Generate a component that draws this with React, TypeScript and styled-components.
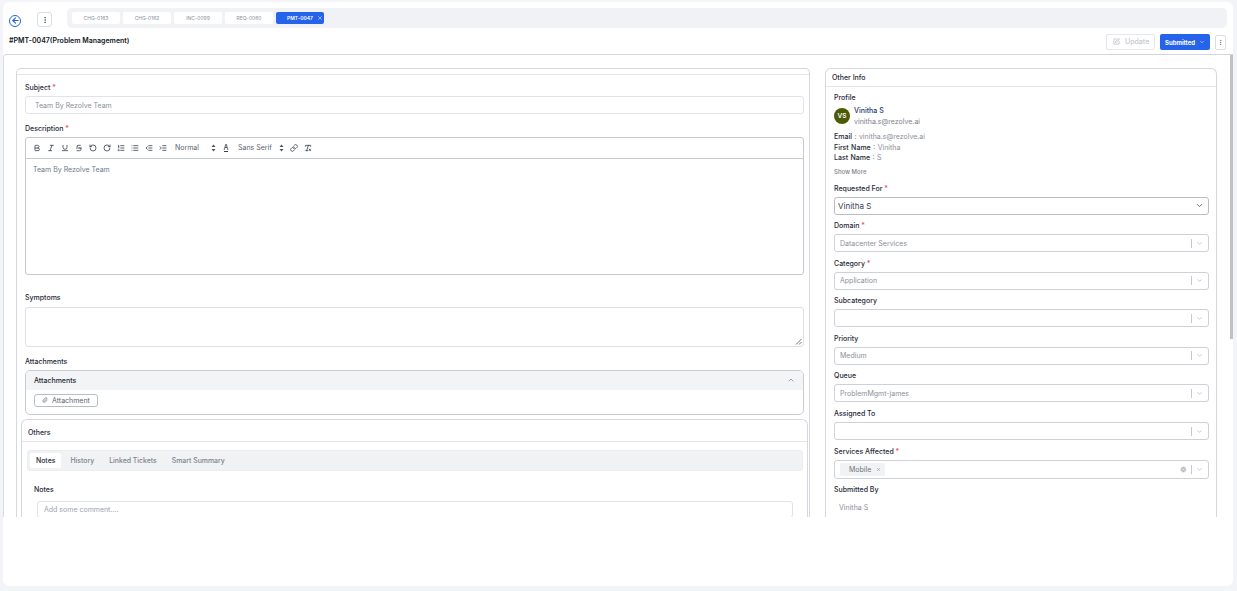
import { FC, ReactNode } from 'react'
import styled, { createGlobalStyle } from 'styled-components'
import {
  ArrowLeft,
  Bold,
  ChevronDown,
  ChevronUp,
  CircleX,
  EllipsisVertical,
  Indent,
  Italic,
  Link,
  List,
  ListOrdered,
  Outdent,
  Paperclip,
  RemoveFormatting,
  RotateCcw,
  RotateCw,
  SquarePen,
  Strikethrough,
  Underline,
  X,
} from 'lucide-react'

const GlobalStyle = createGlobalStyle`
  html, body { margin: 0; padding: 0; height: 100%; overflow: hidden; background: #f3f4f8; }
  body { font-family: Inter, "Noto Sans", "Liberation Sans", sans-serif; color: #1f2937; }
  * { box-sizing: border-box; }
`

const tickets = ['CHG-0163', 'CHG-0162', 'INC-0099', 'REQ-0060']

const toolbarLeft = [Bold, Italic, Underline, Strikethrough, RotateCcw, RotateCw, ListOrdered, List, Outdent, Indent]

const Required: FC = () => <Star>*</Star>

// the up/down arrows of the editor's pickers
const PickerArrows: FC = () => (
  <svg width='5' height='8' viewBox='0 0 5 8'>
    <path d='M2.5 0.5 4.5 3H0.5ZM2.5 7.5 0.5 5H4.5Z' fill='#4b5563' />
  </svg>
)

const SelectField: FC<{ label: string; value?: string; required?: boolean }> = ({ label, value, required }) => (
  <Field>
    <Label tight>
      {label} {required && <Required />}
    </Label>
    <SelectBox>
      <SelectValue>{value}</SelectValue>
      <Separator />
      <ChevronDown size={7} color='#9ca3af' />
    </SelectBox>
  </Field>
)

const Info: FC<{ name: string; children: ReactNode }> = ({ name, children }) => (
  <InfoRow>
    <b>{name}</b> : <span>{children}</span>
  </InfoRow>
)

export default function App() {
  return (
    <>
      <GlobalStyle />
      <Shell>
        <TopRow>
          <BackButton>
            <ArrowLeft size={9} strokeWidth={3} color='#2563eb' />
          </BackButton>
          <Kebab>
            <EllipsisVertical size={8} color='#374151' />
          </Kebab>
          <TabStrip>
            {tickets.map(t => (
              <TicketTab key={t}>{t}</TicketTab>
            ))}
            <ActiveTab>
              PMT-0047
              <X size={6} color='#fff' />
            </ActiveTab>
          </TabStrip>
        </TopRow>
        <TitleRow>
          <Title>#PMT-0047(Problem Management)</Title>
          <Actions>
            <UpdateButton>
              <SquarePen size={7} color='#a9adb5' />
              Update
            </UpdateButton>
            <SubmitButton>
              Submitted
              <ChevronDown size={6} />
            </SubmitButton>
            <SmallKebab>
              <EllipsisVertical size={7} color='#6b7280' />
            </SmallKebab>
          </Actions>
        </TitleRow>
        <Content>
          <Columns>
            <MainCard>
              <MainHead />
              <MainBody>
                <Field>
                  <Label tight>
                    Subject <Required />
                  </Label>
                  <TextInput>Team By Rezolve Team</TextInput>
                </Field>
                <Field>
                  <Label tight>
                    Description <Required />
                  </Label>
                  <Editor>
                    <Toolbar>
                      {toolbarLeft.map((Icon, i) => (
                        <ToolIcon key={i}>
                          <Icon size={8} strokeWidth={2.4} />
                        </ToolIcon>
                      ))}
                      <ToolSelect width={49}>
                        Normal
                        <PickerArrows />
                      </ToolSelect>
                      <ToolIcon>
                        <ColorA>A</ColorA>
                      </ToolIcon>
                      <ToolSelect width={54}>
                        Sans Serif
                        <PickerArrows />
                      </ToolSelect>
                      <ToolIcon>
                        <Link size={8} strokeWidth={2.4} />
                      </ToolIcon>
                      <ToolIcon>
                        <RemoveFormatting size={8} strokeWidth={2.4} />
                      </ToolIcon>
                    </Toolbar>
                    <EditorBody>Team By Rezolve Team</EditorBody>
                  </Editor>
                </Field>
                <SymptomsField>
                  <Label>Symptoms</Label>
                  <TextArea>
                    <Grip viewBox='0 0 7 7'>
                      <path d='M1 6.5 6.5 1M4 6.5 6.5 4' stroke='#4b5563' strokeWidth='0.8' />
                    </Grip>
                  </TextArea>
                </SymptomsField>
                <AttachmentsField>
                  <Label tight>Attachments</Label>
                  <Accordion>
                    <AccordionHead>
                      Attachments
                      <ChevronUp size={8} color='#6b7280' />
                    </AccordionHead>
                    <AccordionBody>
                      <AttachButton>
                        <Paperclip size={6} />
                        Attachment
                      </AttachButton>
                    </AccordionBody>
                  </Accordion>
                </AttachmentsField>
                <OthersCard>
                  <OthersHead>Others</OthersHead>
                  <OthersBody>
                    <NoteTabs>
                      <NoteTab active>Notes</NoteTab>
                      <NoteTab>History</NoteTab>
                      <NoteTab>Linked Tickets</NoteTab>
                      <NoteTab>Smart Summary</NoteTab>
                    </NoteTabs>
                    <NotesLabel>Notes</NotesLabel>
                    <CommentInput>Add some comment....</CommentInput>
                  </OthersBody>
                </OthersCard>
              </MainBody>
            </MainCard>
            <SideCard>
              <SideHead>Other Info</SideHead>
              <SideBody>
                <Label>Profile</Label>
                <Profile>
                  <Avatar>VS</Avatar>
                  <div>
                    <ProfileName>Vinitha S</ProfileName>
                    <ProfileMail>vinitha.s@rezolve.ai</ProfileMail>
                  </div>
                </Profile>
                <Info name='Email'>vinitha.s@rezolve.ai</Info>
                <Info name='First Name'>Vinitha</Info>
                <Info name='Last Name'>S</Info>
                <ShowMore>Show More</ShowMore>
                <Field>
                  <Label tight>
                    Requested For <Required />
                  </Label>
                  <RequestedBox>
                    Vinitha S
                    <ChevronDown size={9} color='#374151' />
                  </RequestedBox>
                </Field>
                <SelectField label='Domain' value='Datacenter Services' required />
                <SelectField label='Category' value='Application' required />
                <SelectField label='Subcategory' />
                <SelectField label='Priority' value='Medium' />
                <SelectField label='Queue' value='ProblemMgmt-james' />
                <SelectField label='Assigned To' />
                <Field>
                  <Label tight>
                    Services Affected <Required />
                  </Label>
                  <ServicesBox>
                    <Chip>
                      Mobile
                      <X size={5} color='#6b7280' />
                    </Chip>
                    <SelectValue />
                    <CircleX size={7} color='#fff' fill='#b5b9c0' />
                    <Separator />
                    <ChevronDown size={7} color='#9ca3af' />
                  </ServicesBox>
                </Field>
                <Label>Submitted By</Label>
                <SubmittedValue>Vinitha S</SubmittedValue>
              </SideBody>
            </SideCard>
          </Columns>
          <ScrollThumb />
        </Content>
      </Shell>
    </>
  )
}

const Shell = styled.div`
  margin: 2px 4px 0 3px;
  height: 584px;
  background: #fff;
  border-radius: 6px;
  padding-top: 6px;
`

const TopRow = styled.div`
  display: flex;
  align-items: center;
  height: 20px;
  padding: 0 6px;
`

const BackButton = styled.div`
  width: 12px;
  height: 12px;
  margin-top: 5px;
  border: 1px solid #2563eb;
  border-radius: 50%;
  display: flex;
  align-items: center;
  justify-content: center;
`

const Kebab = styled.div`
  width: 15px;
  height: 15px;
  margin: 3px 15px 0 16px;
  border: 1px solid #d9dde4;
  border-radius: 3px;
  display: flex;
  align-items: center;
  justify-content: center;
`

const TabStrip = styled.div`
  flex: 1;
  height: 20px;
  padding: 4px 5px;
  display: flex;
  gap: 3px;
  background: #f1f2f5;
  border-radius: 5px;
`

const TicketTab = styled.div`
  width: 48px;
  height: 12px;
  display: flex;
  align-items: center;
  justify-content: center;
  font-size: 5px;
  border-radius: 2px;
  color: #8b919c;
  background: #fff;
`

const ActiveTab = styled(TicketTab)`
  justify-content: flex-start;
  gap: 4px;
  padding-left: 11px;
  color: #fff;
  font-weight: 600;
  background: #2563eb;
`

const TitleRow = styled.div`
  display: flex;
  align-items: flex-start;
  justify-content: space-between;
  height: 16px;
  margin-top: 6px;
  padding: 0 7px 0 6px;
`

const Title = styled.div`
  font-size: 7px;
  line-height: 13px;
  font-weight: 600;
  color: #111827;
`

const Actions = styled.div`
  display: flex;
  align-items: center;
`

const UpdateButton = styled.div`
  width: 49px;
  height: 16px;
  display: flex;
  align-items: center;
  gap: 5px;
  padding: 0 0 1px 6px;
  border: 1px solid #e5e7eb;
  border-radius: 2px;
  font-size: 7px;
  font-weight: 500;
  color: #c4c8cf;
`

const SubmitButton = styled.div`
  width: 50px;
  height: 16px;
  margin-left: 5px;
  display: flex;
  align-items: center;
  gap: 4px;
  padding-left: 5px;
  background: #2563eb;
  border-radius: 2px;
  color: #fff;
  font-size: 6px;
  font-weight: 700;
`

const SmallKebab = styled.div`
  width: 11px;
  height: 15px;
  margin-left: 5px;
  border: 1px solid #d9dde4;
  border-radius: 2px;
  display: flex;
  align-items: center;
  justify-content: center;
`

const Content = styled.div`
  position: relative;
  height: 463px;
  margin-top: 4px;
  overflow: hidden;
  border-top: 1.5px solid #d4d6da;
  border-left: 1px solid #d9dde4;
  border-top-left-radius: 4px;
`

const Columns = styled.div`
  display: flex;
  align-items: flex-start;
  gap: 15px;
  padding: 13px 15px 0 12px;
`

const MainCard = styled.div`
  width: 794px;
  height: 470px;
  flex: none;
  border: 1px solid #d5d8de;
  border-bottom: none;
  border-radius: 5px 5px 0 0;
`

const MainHead = styled.div`
  height: 6px;
  border-bottom: 1px solid #e2e6ec;
`

const MainBody = styled.div`
  padding: 8px 5px 0 8px;
`

const Field = styled.div`
  margin-bottom: 6.6px;
`

const SymptomsField = styled(Field)`
  margin-top: 18px;
  margin-bottom: 10px;
`

const AttachmentsField = styled(Field)`
  margin-bottom: 4px;
`

const Label = styled.div<{ tight?: boolean }>`
  height: 10px;
  margin-bottom: ${props => (props.tight ? 3 : 4)}px;
  font-size: 7px;
  line-height: 10px;
  font-weight: 500;
  color: #1f2937;
`

const Star = styled.span`
  color: #ef4444;
`

const TextInput = styled.div`
  height: 18px;
  margin-bottom: 9.6px;
  padding-left: 9px;
  display: flex;
  align-items: center;
  border: 1px solid #e0e4ea;
  border-radius: 3px;
  font-size: 7px;
  color: #8a8f98;
`

const Editor = styled.div`
  height: 138px;
  border: 1px solid #c6c9cf;
  border-radius: 3px;
`

const Toolbar = styled.div`
  height: 21px;
  display: flex;
  align-items: center;
  padding-left: 4px;
  border-bottom: 1px solid #c6c9cf;
  color: #374151;
`

const ToolIcon = styled.div`
  width: 14px;
  display: flex;
  justify-content: center;
`

const ToolSelect = styled.div<{ width: number }>`
  width: ${props => props.width}px;
  display: flex;
  align-items: center;
  justify-content: space-between;
  padding: 0 3px 0 5px;
  font-size: 7px;
  color: #5b6470;
`

const ColorA = styled.span`
  font-size: 7px;
  line-height: 7px;
  font-weight: 500;
  border-bottom: 1px solid #374151;
`

const EditorBody = styled.div`
  padding: 6px 7px;
  font-size: 7px;
  line-height: 10px;
  color: #6b7a8a;
`

const TextArea = styled.div`
  position: relative;
  height: 40px;
  border: 1px solid #dde1e7;
  border-radius: 3px;
`

const Grip = styled.svg`
  position: absolute;
  right: 1px;
  bottom: 1px;
  width: 7px;
  height: 7px;
`

const Accordion = styled.div`
  height: 45px;
  border: 1px solid #c9ccd2;
  border-radius: 5px;
  overflow: hidden;
`

const AccordionHead = styled.div`
  height: 19px;
  display: flex;
  align-items: center;
  justify-content: space-between;
  padding: 0 8px;
  background: #f3f4f5;
  font-size: 7px;
  font-weight: 500;
`

const AccordionBody = styled.div`
  padding: 4px 8px;
`

const AttachButton = styled.div`
  width: 64px;
  height: 13px;
  display: flex;
  align-items: center;
  gap: 4px;
  padding-left: 7px;
  border: 1px solid #b9bdc4;
  border-radius: 3px;
  font-size: 7px;
  color: #5b6470;
`

const OthersCard = styled.div`
  width: 787px;
  height: 120px;
  margin: 0 0 0 -4px;
  border: 1px solid #d5d8de;
  border-bottom: none;
  border-radius: 6px 6px 0 0;
  background: #fff;
`

const OthersHead = styled.div`
  height: 22px;
  padding: 4px 0 0 6px;
  display: flex;
  align-items: center;
  border-bottom: 1px solid #e2e6ec;
  font-size: 7px;
  font-weight: 500;
`

const OthersBody = styled.div`
  padding: 8px 4px 0 5px;
`

const NoteTabs = styled.div`
  height: 21px;
  display: flex;
  align-items: center;
  padding-left: 2px;
  background: #f1f2f4;
  border: 1px solid #ebedf0;
  border-radius: 3px;
`

const NoteTab = styled.div<{ active?: boolean }>`
  height: 15px;
  padding: 0 6px;
  margin-right: 3px;
  display: flex;
  align-items: center;
  border-radius: 2px;
  font-size: 6.9px;
  font-weight: 500;
  color: ${props => (props.active ? '#1f2937' : '#7c828c')};
  background: ${props => (props.active ? '#fff' : 'transparent')};
`

const NotesLabel = styled(Label)`
  margin: 14px 0 6px 7px;
`

const CommentInput = styled.div`
  height: 17px;
  margin: 0 10px;
  padding-left: 6px;
  display: flex;
  align-items: center;
  border: 1px solid #e0e4ea;
  border-radius: 3px;
  font-size: 7px;
  color: #9ca3af;
`

const SideCard = styled.div`
  width: 392px;
  flex: none;
  height: 460px;
  border: 1px solid #d5d8de;
  border-bottom: none;
  border-radius: 6px 6px 0 0;
`

const SideHead = styled.div`
  height: 18px;
  padding-left: 6px;
  display: flex;
  align-items: center;
  border-bottom: 1px solid #e2e6ec;
  font-size: 7px;
  font-weight: 500;
`

const SideBody = styled.div`
  padding: 6px 7px 0 8px;
`

const Profile = styled.div`
  display: flex;
  align-items: center;
  gap: 4px;
  margin: -2px 0 5px;
`

const Avatar = styled.div`
  width: 16px;
  height: 16px;
  display: flex;
  align-items: center;
  justify-content: center;
  border-radius: 50%;
  background: #4d5a05;
  color: #fff;
  font-size: 6.5px;
  font-weight: 600;
`

const ProfileName = styled.div`
  font-size: 7px;
  line-height: 11px;
  font-weight: 500;
  color: #1e3a6e;
`

const ProfileMail = styled.div`
  font-size: 7px;
  line-height: 11px;
  color: #7c828c;
`

const InfoRow = styled.div`
  height: 10.5px;
  font-size: 7px;
  line-height: 10.5px;
  word-spacing: 0.5px;
  color: #6b7280;

  b {
    font-weight: 500;
    color: #1f2937;
  }

  span {
    color: #8a8f98;
  }
`

const ShowMore = styled.div`
  margin: 3px 0 7px;
  font-size: 6px;
  line-height: 10px;
  font-weight: 500;
  color: #7c828c;
`

const RequestedBox = styled.div`
  height: 18px;
  padding: 0 4px 0 3px;
  display: flex;
  align-items: center;
  justify-content: space-between;
  border: 1px solid #b9bdc4;
  border-radius: 3px;
  font-size: 8px;
  color: #374151;
`

const SelectBox = styled.div`
  height: 18px;
  padding: 0 5px;
  display: flex;
  align-items: center;
  gap: 4px;
  border: 1px solid #ced1d7;
  border-radius: 3px;
`

const SelectValue = styled.div`
  flex: 1;
  font-size: 7px;
  color: #8a8f98;
`

const Separator = styled.div`
  width: 1px;
  height: 9px;
  background: #c6c9cf;
`

const ServicesBox = styled(SelectBox)`
  height: 19px;
`

const Chip = styled.div`
  width: 45px;
  height: 13px;
  display: flex;
  align-items: center;
  gap: 5px;
  padding-left: 9px;
  border-radius: 2px;
  background: #f1f2f4;
  font-size: 7px;
  color: #6b7280;
`

const SubmittedValue = styled.div`
  margin: 8px 0 0 5px;
  font-size: 7px;
  line-height: 10px;
  color: #8a8f98;
`

const ScrollThumb = styled.div`
  position: absolute;
  top: 0;
  right: 0;
  width: 3px;
  height: 284px;
  background: #c1c1c1;
`
